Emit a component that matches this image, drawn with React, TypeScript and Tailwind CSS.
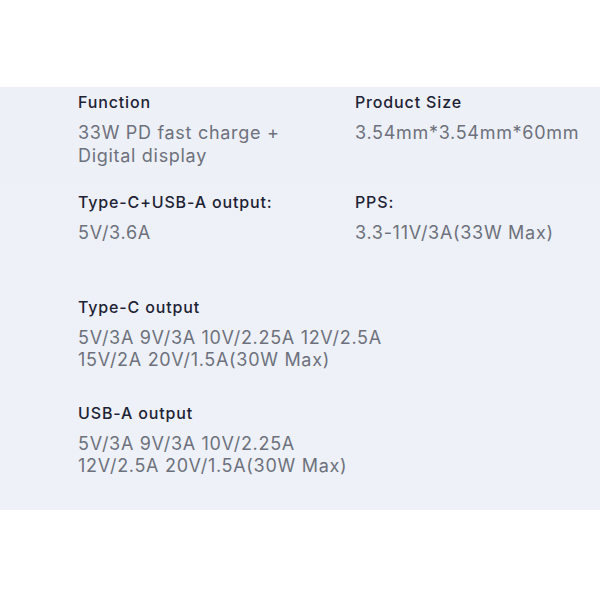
const font = { fontFamily: 'Inter, "Liberation Sans", sans-serif' };

function Spec({ title, lines }: { title: string; lines: string[] }) {
  return (
    <div className="flex flex-col gap-[10px]">
      <div className="text-[16px] leading-[20px] font-medium text-[#1d2335] tracking-[0.85px]">{title}</div>
      <div className="text-[18px] leading-[22.5px] text-[#6d717d] tracking-[0.7px]">
        {lines.map((l) => (
          <div key={l}>{l}</div>
        ))}
      </div>
    </div>
  );
}

export default function App() {
  return (
    <div className="w-[600px] h-[600px] bg-white" style={font}>
      <div className="h-[87px]" />
      <div className="h-[423px] bg-gradient-to-b from-[#edf0f6] to-[#eef1f8] pl-[78px] pt-[5px]">
        <div className="grid grid-cols-[277px_1fr] gap-y-[24px]">
          <Spec title="Function" lines={['33W PD fast charge +', 'Digital display']} />
          <Spec title="Product Size" lines={['3.54mm*3.54mm*60mm']} />
          <div className="mt-px">
            <Spec title="Type-C+USB-A output:" lines={['5V/3.6A']} />
          </div>
          <div className="mt-px">
            <Spec title="PPS:" lines={['3.3-11V/3A(33W Max)']} />
          </div>
        </div>
        <div className="mt-[52px] flex flex-col gap-[31px]">
          <Spec
            title="Type-C output"
            lines={['5V/3A 9V/3A 10V/2.25A 12V/2.5A', '15V/2A 20V/1.5A(30W Max)']}
          />
          <Spec title="USB-A output" lines={['5V/3A 9V/3A 10V/2.25A', '12V/2.5A 20V/1.5A(30W Max)']} />
        </div>
      </div>
    </div>
  );
}
